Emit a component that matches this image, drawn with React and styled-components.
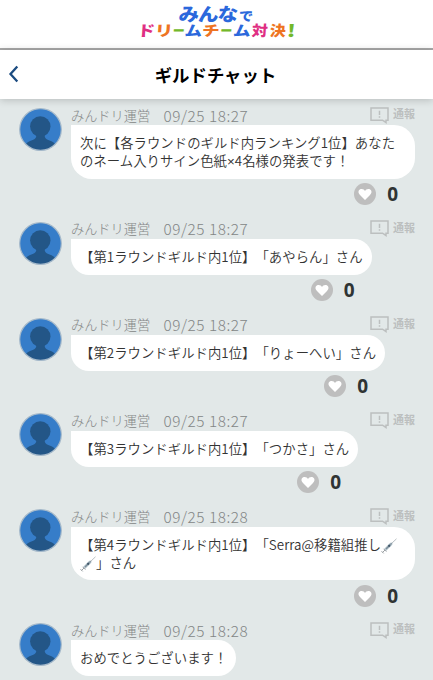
import styled, { createGlobalStyle } from 'styled-components'

const GlobalStyle = createGlobalStyle`
  * {
    box-sizing: border-box;
  }
  body {
    margin: 0;
    background: #e2e8e8;
    font-family: "Noto Sans CJK JP", sans-serif;
    overflow: hidden;
  }
`;

const Page = styled.div`
  height: 680px;
  overflow: hidden;
  text-spacing-trim: space-all;
`;

const Banner = styled.header`
  height: 50px;
  padding-top: 5px;
  background: #fff;
  border-bottom: 2px solid #a9a9a9;
  display: flex;
  flex-direction: column;
  align-items: center;
`;

const LogoLine = styled.div`
  display: flex;
  align-items: flex-end;
  height: ${props => props.$height}px;
  line-height: ${props => props.$height}px;
  font-weight: ${props => props.$weight};
`;

const LogoChar = styled.span`
  width: ${props => props.$width}px;
  font-size: ${props => props.$size}px;
  color: ${props => props.$color};
  display: flex;
  justify-content: center;
  white-space: nowrap;
  transform: skewX(-4deg) scaleX(${props => props.$stretch || 1});
`;

const LowChar = styled(LogoChar)`
  line-height: 12px;
`;

const TitleBar = styled.div`
  height: 49px;
  padding: 0 8px;
  background: #fff;
  box-shadow: 0 1px 8px rgba(0, 0, 0, 0.2);
  display: grid;
  grid-template-columns: 12px 1fr 14px;
  align-items: center;
  position: relative;

  h1 {
    margin: 0;
    font-size: 17.4px;
    line-height: 48px;
    font-weight: 700;
    text-align: center;
    color: #000;
  }

  svg {
    margin-bottom: 1px;
  }
`;

const List = styled.main`
  padding: 9px 18px 0 19px;
`;

const Row = styled.article`
  display: flex;
  gap: 9px;
  padding-bottom: 42.8px;
`;

const Avatar = styled.svg`
  width: 43px;
  height: 43px;
  flex: none;
`;

const Body = styled.div`
  flex: 1;
  min-width: 0;
`;

const Meta = styled.div`
  height: 17.3px;
  padding-bottom: 3px;
  display: flex;
  align-items: center;
  font-weight: 300;
  line-height: 17px;
  color: #828686;
`;

const Name = styled.span`
  width: 92.5px;
  font-size: 13.2px;
`;

const Time = styled.time`
  font-size: 15.3px;
  letter-spacing: 0.55px;
`;

const Report = styled.span`
  margin-left: auto;
  display: flex;
  align-items: center;
  gap: 4px;
  font-size: 11px;
  font-weight: 700;
  color: #bcbfbf;
  margin-top: -3px;

  svg {
    margin-top: 3px;
  }
`;

const Column = styled.div`
  display: flex;
  flex-direction: column;
  width: ${props => props.$wide ? '100%' : 'fit-content'};
`;

const Bubble = styled.p`
  margin: 0;
  height: ${props => props.$lines * 17.8 + 18}px;
  padding: 9px;
  background: #fff;
  border-radius: 0 ${props => props.$round}px ${props => props.$round}px ${props => props.$round}px;
  font-size: 13.35px;
  font-weight: 350;
  letter-spacing: 0.05px;
  line-height: 17.8px;
  color: #333;
  white-space: nowrap;
`;

const Times = styled.span`
  font-family: "Liberation Sans", sans-serif;
  line-height: 1;
`;

// sits in the bottom space of the row
const Likes = styled.div`
  height: 22px;
  margin: 4.5px 17px -26.5px 0;
  display: flex;
  align-items: center;
  justify-content: flex-end;
  gap: 11px;
  font: 700 19px/22px "Open Sans", sans-serif;
  color: #2f3434;
`;

const SyringeSvg = styled.svg`
  width: 16px;
  height: 16px;
  vertical-align: -4px;
`;

const blue = '#2b68dc'
const pink = '#df2f83'
const orange = '#ee7422'
const green = '#72b82a'

const logoTop = [
  ['み', 20, 18.5, blue, 1.1],
  ['ん', 19, 18.5, blue, 1.1],
  ['な', 20, 18.5, blue, 1.1],
]

const logoBottom = [
  ['ド', 17, 14.5, pink, 1.2],
  ['リ', 18, 14.5, orange, 1.25],
  ['ー', 12, 12, green, 1],
  ['ム', 17, 14.5, blue, 1.2],
  ['チ', 18, 14.5, orange, 1.2],
  ['ー', 13, 12, green, 1],
  ['ム', 18, 14.5, blue, 1.2],
  ['対', 18, 14.5, pink, 1.1],
  ['決', 18, 14.5, orange, 1.1],
  ['!', 9, 17, green, 1.3],
]

function LogoChars({ chars }) {
  return chars.map(([char, width, size, color, stretch], i) => (
    <LogoChar key={i} $width={width} $size={size} $color={color} $stretch={stretch}>{char}</LogoChar>
  ))
}

function Syringe() {
  return (
    <SyringeSvg viewBox="0 0 16 16" fill="none">
      <path d="M10 6 15.5.8" stroke="#a5adb3" strokeWidth=".8" />
      <path d="M4 12 10.5 5.5" stroke="#b9c8d1" strokeWidth="3" />
      <path d="M5 11 8 8" stroke="#7b8c98" strokeWidth="1.4" />
      <path d="M7.5 8.5 9 7" stroke="#3f5668" strokeWidth="2" />
      <path d="M9 7 11 5" stroke="#8b9ba6" strokeWidth="1.4" />
      <path d="M1.5 14.5 4 12M.5 13.2l2.2 2.2M2.6 10.8l2.8 2.8" stroke="#9a9fa3" strokeWidth="1" />
    </SyringeSvg>
  )
}

const messages = [
  { time: '09/25 18:27', text: <>次に【各ラウンドのギルド内ランキング1位】あなた<br />のネーム入りサイン色紙<Times>×</Times>4名様の発表です！</>, lines: 2 },
  { time: '09/25 18:27', text: '【第1ラウンドギルド内1位】「あやらん」さん' },
  { time: '09/25 18:27', text: '【第2ラウンドギルド内1位】「りょーへい」さん' },
  { time: '09/25 18:27', text: '【第3ラウンドギルド内1位】「つかさ」さん' },
  { time: '09/25 18:28', text: <>【第4ラウンドギルド内1位】「Serra@移籍組推し<Syringe /><br /><Syringe />」さん</>, lines: 2 },
  { time: '09/25 18:28', text: 'おめでとうございます！', last: true },
]

function Message({ time, text, lines = 1, last }) {
  return (
    <Row>
      <Avatar viewBox="0 0 43 43">
        <clipPath id="face"><circle cx="21.5" cy="21.5" r="20.8" /></clipPath>
        <circle cx="21.5" cy="21.5" r="20.8" fill="#367dc9" />
        <g clipPath="url(#face)" fill="#235687">
          <circle cx="21.3" cy="18.5" r="10.2" />
          <path d="M17.5 26h8c0 6 3.5 5.5 7 7.2 2.5 1.2 4.5 3.3 5.5 5.8v5H5v-5c1-2.5 3-4.6 5.5-5.8 3.5-1.7 7-1.2 7-7.2Z" />
        </g>
        <circle cx="21.5" cy="21.5" r="20.8" fill="none" stroke="#a5b9ca" strokeWidth="1.2" />
      </Avatar>
      <Body>
        <Meta>
          <Name>みんドリ運営</Name>
          <Time>{time}</Time>
          <Report>
            <svg width="19" height="17" viewBox="0 0 19 17" fill="none">
              <path d="M1 1h17v12.2H16V15.5L12.5 13.2H1Z" stroke="#bcbfbf" strokeWidth="1.5" />
              <path d="M9.5 3.8V8M9.5 9.2v1.6" stroke="#bcbfbf" strokeWidth="1.5" />
            </svg>
            通報
          </Report>
        </Meta>
        <Column $wide={lines === 2}>
          <Bubble $lines={lines} $round={lines === 2 ? 21 : 18}>{text}</Bubble>
          {!last && (
            <Likes>
              <svg width="22" height="22" viewBox="0 0 22 22">
                <circle cx="11" cy="11" r="11" fill="#bebebe" />
                <path d="M11 17 6 12C2.9 8.7 5.1 6 7.6 6 9.2 6 10.4 6.8 11 8c.6-1.2 1.8-2 3.4-2 2.5 0 4.7 2.7 1.6 6Z" fill="#fff" />
              </svg>
              0
            </Likes>
          )}
        </Column>
      </Body>
    </Row>
  )
}

function App() {
  return (
    <>
      <GlobalStyle />
      <Page>
        <Banner>
          <LogoLine $height={17} $weight={900}>
            <LogoChars chars={logoTop} />
            <LowChar $width={16} $size={13} $color={blue} $stretch={1.1}>で</LowChar>
          </LogoLine>
          <LogoLine $height={15} $weight={900}>
            <LogoChars chars={logoBottom} />
          </LogoLine>
        </Banner>
        <TitleBar>
          <svg width="12" height="18" viewBox="0 0 12 18" fill="none">
            <path d="M9.3 1.5 2.5 9l6.800 7.5" stroke="#1b4b80" strokeWidth="2.3" />
          </svg>
          <h1>ギルドチャット</h1>
        </TitleBar>
        <List>
          {messages.map((message, i) => (
            <Message key={i} {...message} />
          ))}
        </List>
      </Page>
    </>
  )
}

export default App
